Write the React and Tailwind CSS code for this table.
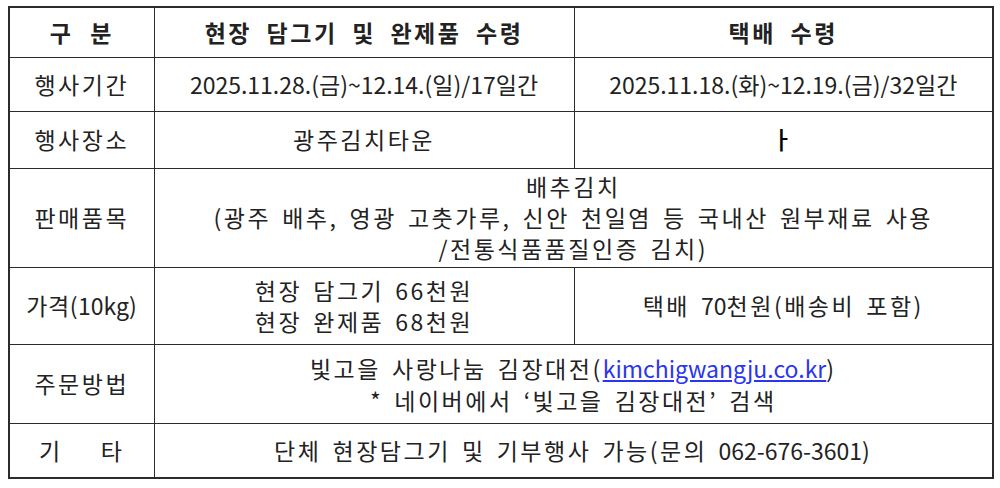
import React from "react";

const font = {
  fontFamily: '"Noto Sans CJK KR", "Noto Sans", sans-serif',
};

function Cell({ children, className = "", colSpan }) {
  return (
    <td
      colSpan={colSpan}
      className={`border border-[#2b2b2b] text-center align-middle p-0 ${className}`}
    >
      {children}
    </td>
  );
}

// numbers and latin text keep normal tracking
function N({ children, className = "" }) {
  return <span className={`tracking-normal ${className}`}>{children}</span>;
}

export default function App() {
  return (
    <div className="w-[1000px] h-[488px] bg-white pt-[6px] pl-[8px]" style={font}>
      <table className="w-[984px] table-fixed border-collapse border-2 border-[#2b2b2b] text-[23px] text-[#222] tracking-[2.5px] [word-spacing:0.15em]">
        <colgroup>
          <col className="w-[145px]" />
          <col className="w-[420px]" />
          <col className="w-[419px]" />
        </colgroup>
        <tbody>
          <tr className="h-[50px] font-bold">
            <Cell className="[word-spacing:0.4em]">구 분</Cell>
            <Cell className="[word-spacing:0.3em]">현장 담그기 및 완제품 수령</Cell>
            <Cell className="[word-spacing:0.3em]">택배 수령</Cell>
          </tr>
          <tr className="h-[54px]">
            <Cell>행사기간</Cell>
            <Cell className="tracking-normal">2025.11.28.(금)~12.14.(일)/17일간</Cell>
            <Cell className="tracking-normal">2025.11.18.(화)~12.19.(금)/32일간</Cell>
          </tr>
          <tr className="h-[57px]">
            <Cell>행사장소</Cell>
            <Cell>광주김치타운</Cell>
            <Cell>
              <span className="text-black text-[24px] font-medium leading-none">ㅏ</span>
            </Cell>
          </tr>
          <tr className="h-[99px]">
            <Cell>판매품목</Cell>
            <Cell colSpan={2} className="leading-[31px]">
              <div>배추김치</div>
              <div>(광주 배추, 영광 고춧가루, 신안 천일염 등 국내산 원부재료 사용</div>
              <div>/전통식품품질인증 김치)</div>
            </Cell>
          </tr>
          <tr className="h-[77px]">
            <Cell className="tracking-[0.5px]">가격(<N>10kg</N>)</Cell>
            <Cell className="leading-[31px]">
              <div>현장 담그기 66천원</div>
              <div>현장 완제품 68천원</div>
            </Cell>
            <Cell>택배 <N>70</N>천원(배송비 포함)</Cell>
          </tr>
          <tr className="h-[79px]">
            <Cell>주문방법</Cell>
            <Cell colSpan={2} className="leading-[32px]">
              <div>
                빛고을 사랑나눔 김장대전(
                <N className="text-[#2a35f0] underline underline-offset-2 [word-spacing:0]">kimchigwangju.co.kr</N>)
              </div>
              <div>* 네이버에서 ‘빛고을 김장대전’ 검색</div>
            </Cell>
          </tr>
          <tr className="h-[55px]">
            <Cell>
              <div className="flex justify-between px-[29px]">
                <span>기</span>
                <span>타</span>
              </div>
            </Cell>
            <Cell colSpan={2}>
              단체 현장담그기 및 기부행사 가능(문의 <N>062-676-3601</N>)
            </Cell>
          </tr>
        </tbody>
      </table>
    </div>
  );
}
